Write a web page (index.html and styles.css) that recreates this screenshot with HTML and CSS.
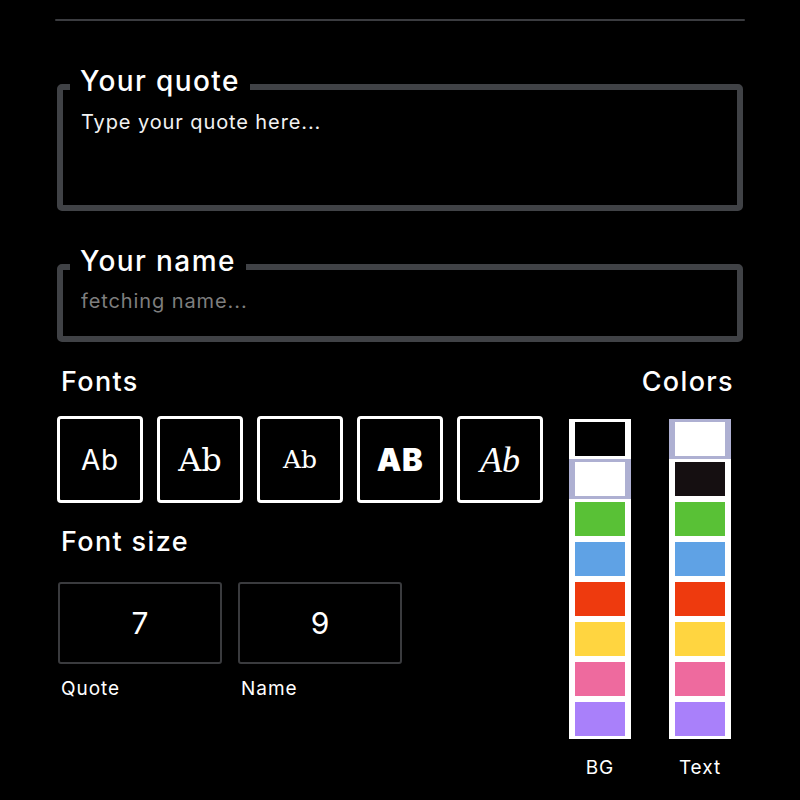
FILE: index.html
```html
<!DOCTYPE html>
<html lang="en">
<head>
<meta charset="utf-8">
<title>Quote card editor</title>
<link rel="stylesheet" href="styles.css">
</head>
<body>
<div class="page">
  <div class="rule"></div>
  <form class="editor">
    <fieldset class="field field-quote">
      <legend>Your quote</legend>
      <textarea class="quote-input" placeholder="Type your quote here..."></textarea>
    </fieldset>

    <fieldset class="field field-name">
      <legend>Your name</legend>
      <input class="name-input" type="text" placeholder="fetching name...">
    </fieldset>

    <div class="options">
      <div class="options-main">
        <h2 class="section-title">Fonts</h2>
        <div class="font-list">
          <button type="button" class="font-card f-sans">Ab</button>
          <button type="button" class="font-card f-mono">Ab</button>
          <button type="button" class="font-card f-slab">Ab</button>
          <button type="button" class="font-card f-heavy">AB</button>
          <button type="button" class="font-card f-script">Ab</button>
        </div>

        <h2 class="section-title size-title">Font size</h2>
        <div class="size-list">
          <div class="size-item">
            <div class="size-box">7</div>
            <span class="size-label">Quote</span>
          </div>
          <div class="size-item">
            <div class="size-box">9</div>
            <span class="size-label">Name</span>
          </div>
        </div>
      </div>

      <div class="options-colors">
        <h2 class="section-title colors-title">Colors</h2>
        <div class="palettes">
          <div class="palette">
            <ul class="swatches">
              <li class="swatch c-black"></li>
              <li class="swatch c-white is-selected"></li>
              <li class="swatch c-green"></li>
              <li class="swatch c-blue"></li>
              <li class="swatch c-red"></li>
              <li class="swatch c-yellow"></li>
              <li class="swatch c-pink"></li>
              <li class="swatch c-purple"></li>
            </ul>
            <span class="palette-label">BG</span>
          </div>
          <div class="palette">
            <ul class="swatches">
              <li class="swatch c-white is-selected"></li>
              <li class="swatch c-ink"></li>
              <li class="swatch c-green"></li>
              <li class="swatch c-blue"></li>
              <li class="swatch c-red"></li>
              <li class="swatch c-yellow"></li>
              <li class="swatch c-pink"></li>
              <li class="swatch c-purple"></li>
            </ul>
            <span class="palette-label">Text</span>
          </div>
        </div>
      </div>
    </div>
  </form>
</div>
</body>
</html>
```

FILE: styles.css
```css
* {
  box-sizing: border-box;
}

body {
  margin: 0;
  background: #000;
  color: #fff;
  font-family: Inter, "DejaVu Sans", sans-serif;
}

.page {
  width: 686px;
  margin: 0 auto;
  padding-top: 19px;
}

.rule {
  height: 2px;
  margin: 0 -2px;
  background: #3b3c40;
  border-radius: 1px;
}

/* text fields with a label notched into the border */
.field {
  margin: 0;
  min-width: 0;
  padding: 0 7px;
  border: 6px solid #404246;
  border-radius: 5px;
}

.field legend {
  padding: 0 10px 12px;
  font-size: 28px;
  line-height: 28px;
  font-weight: 500;
  letter-spacing: 0.05em;
}

.field-quote {
  margin-top: 46px;
}

.field-name {
  margin-top: 36px;
}

.quote-input,
.name-input {
  display: block;
  width: 100%;
  padding: 0 11px;
  border: 0;
  outline: none;
  background: transparent;
  color: #fff;
  font-family: Inter, "DejaVu Sans", sans-serif;
  font-size: 20px;
  line-height: 26px;
  letter-spacing: 0.045em;
}

.quote-input {
  height: 96px;
  margin-top: 2px;
  resize: none;
}

.quote-input::placeholder {
  color: #f2f2f2;
  opacity: 1;
}

.name-input {
  height: 48px;
  margin-top: 1px;
  padding-bottom: 22px;
}

.name-input::placeholder {
  color: #7e7e7e;
  opacity: 1;
}

/* option panels */
.options {
  display: flex;
  justify-content: space-between;
  margin-top: 24px;
}

.options-main {
  width: 486px;
}

.options-colors {
  width: 174px;
}

.section-title {
  margin: 0;
  padding-left: 4px;
  font-size: 27px;
  line-height: 31px;
  font-weight: 500;
  letter-spacing: 0.05em;
}

.colors-title {
  padding-left: 0;
  padding-right: 9px;
  text-align: right;
}

.font-list {
  display: flex;
  gap: 14px;
  margin-top: 19px;
}

.font-card {
  display: flex;
  align-items: center;
  justify-content: center;
  width: 86px;
  height: 87px;
  padding: 0;
  border: 3px solid #fff;
  border-radius: 4px;
  background: #000;
  color: #fff;
  line-height: 1;
}

.f-sans {
  font-family: Inter, sans-serif;
  font-size: 28px;
  font-weight: 400;
  letter-spacing: 0.03em;
}

.f-mono {
  font-family: "DejaVu Serif", serif;
  font-size: 32px;
}

.f-slab {
  font-family: "DejaVu Serif", serif;
  font-size: 25px;
}

.f-heavy {
  font-family: Inter, sans-serif;
  font-size: 31px;
  font-weight: 900;
  letter-spacing: 0.02em;
}

.f-script {
  font-family: "Liberation Serif", serif;
  font-style: italic;
  font-size: 36px;
}

.size-title {
  margin-top: 23px;
}

.size-list {
  display: flex;
  gap: 16px;
  margin-top: 25px;
  padding-left: 1px;
}

.size-item {
  display: flex;
  flex-direction: column;
  width: 164px;
}

.size-box {
  display: flex;
  align-items: center;
  justify-content: center;
  height: 82px;
  border: 2.5px solid #3a3b3e;
  border-radius: 3px;
  font-size: 30px;
}

.size-label {
  margin-top: 14px;
  padding-left: 3px;
  font-size: 19px;
  line-height: 22px;
  letter-spacing: 0.05em;
}

/* colour pickers */
.palettes {
  display: flex;
  gap: 38px;
  margin-top: 22px;
}

.palette {
  display: flex;
  flex-direction: column;
  align-items: center;
  width: 62px;
}

.swatches {
  width: 62px;
  margin: 0;
  padding: 0;
  list-style: none;
  background: #fff;
}

.swatch {
  height: 40px;
  border: 3px solid #fff;
  border-left-width: 6px;
  border-right-width: 6px;
}

.swatch.is-selected {
  border-color: #aeb0d2;
}

.palette-label {
  margin-top: 18px;
  font-size: 19px;
  line-height: 22px;
  letter-spacing: 0.05em;
}

.c-black { background: #000; }
.c-white { background: #fff; }
.c-ink { background: #150f11; }
.c-green { background: #59c136; }
.c-blue { background: #5fa2e5; }
.c-red { background: #ee3a0e; }
.c-yellow { background: #ffd540; }
.c-pink { background: #ee6a9e; }
.c-purple { background: #a980fa; }
```
